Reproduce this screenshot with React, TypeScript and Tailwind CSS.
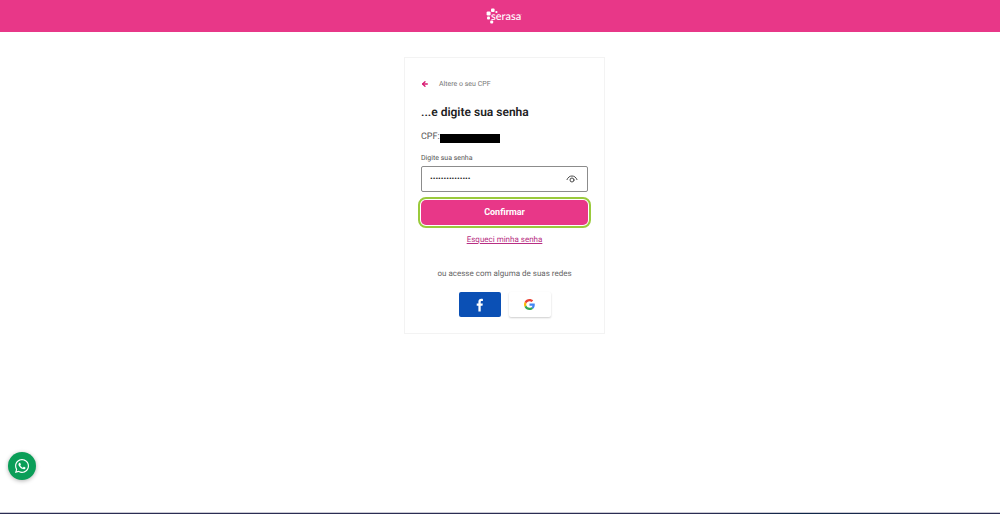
import React, { useState } from 'react';
import { ArrowLeft } from 'lucide-react';
import { FaWhatsapp } from 'react-icons/fa';

function SerasaLogo() {
  return (
    <a href="#" aria-label="Serasa" className="flex w-9 h-4 text-white">
      <svg viewBox="0 0 36 16" className="w-9 h-4" fill="currentColor">
        <rect x="5" y="0.4" width="3.6" height="3.6" rx="1" />
        <rect x="0.6" y="3.4" width="4" height="4" rx="1.2" />
        <circle cx="10.4" cy="4" r="1.1" />
        <rect x="1" y="8.4" width="3" height="3" rx="1" />
        <rect x="4.2" y="12.6" width="3" height="3" rx="1" />
        <circle cx="35" cy="6.4" r="0.4" />
        <text x="5" y="12" fontFamily="Lato, sans-serif" fontSize="11" fontWeight="500" textRendering="geometricPrecision">serasa</text>
      </svg>
    </a>
  );
}

function EyeIcon() {
  return (
    <svg viewBox="0 0 12 8" className="w-3 h-2" fill="none" stroke="#4a4a4a" strokeWidth="1" strokeLinecap="round">
      <path d="M1 4.6C2 2.2 3.8 1 6 1s4 1.2 5 3.6" />
      <circle cx="6" cy="5" r="2" />
    </svg>
  );
}

function GoogleIcon() {
  return (
    <svg viewBox="0 0 48 48" className="w-[11px] h-[11px]">
      <path fill="#EA4335" d="M24 9.5c3.54 0 6.71 1.22 9.21 3.6l6.85-6.85C35.9 2.38 30.47 0 24 0 14.62 0 6.51 5.38 2.56 13.22l7.98 6.19C12.43 13.72 17.74 9.5 24 9.5z" />
      <path fill="#4285F4" d="M46.98 24.55c0-1.57-.15-3.09-.38-4.55H24v9.02h12.94c-.58 2.96-2.26 5.48-4.78 7.18l7.73 6c4.51-4.18 7.09-10.36 7.09-17.65z" />
      <path fill="#FBBC05" d="M10.53 28.59c-.48-1.45-.76-2.99-.76-4.59s.27-3.14.76-4.59l-7.98-6.19C.92 16.46 0 20.12 0 24c0 3.88.92 7.54 2.56 10.78l7.97-6.19z" />
      <path fill="#34A853" d="M24 48c6.48 0 11.93-2.13 15.89-5.81l-7.73-6c-2.15 1.45-4.92 2.3-8.16 2.3-6.26 0-11.57-4.22-13.47-9.91l-7.98 6.19C6.51 42.62 14.62 48 24 48z" />
    </svg>
  );
}

function LoginCard() {
  const [password, setPassword] = useState('minhasenha12345');
  const [visible, setVisible] = useState(false);

  return (
    <form
      onSubmit={(e) => e.preventDefault()}
      className="w-full max-w-[201px] border border-[#f3f3f3] px-4 pt-5 pb-4 flex flex-col"
    >
      <a href="#" className="flex items-center gap-2.5 h-3 text-[7px] text-[#777]">
        <ArrowLeft size={8} strokeWidth={4} className="text-[#d81b72]" />
        Altere o seu CPF
      </a>

      <h1 className="mt-[14px] text-[12px] leading-4 font-semibold text-[#222]">...e digite sua senha</h1>

      <p className="mt-3 flex items-center h-3 text-[9px] text-[#555]">
        CPF:
        <span className="w-15 h-[9px] bg-black" />
      </p>

      <label htmlFor="senha" className="mt-2 text-[7px] leading-3 text-[#555]">Digite sua senha</label>
      <div className="mt-0.5 flex items-center h-[26px] rounded-xs border border-[#8c8c8c] pl-2 pr-[9px]">
        <input
          id="senha"
          type={visible ? 'text' : 'password'}
          value={password}
          onChange={(e) => setPassword(e.target.value)}
          className="flex-1 min-w-0 text-[8px] leading-4 text-[#222] outline-none"
        />
        <button type="button" aria-label="Mostrar senha" onClick={() => setVisible(!visible)}>
          <EyeIcon />
        </button>
      </div>

      <button
        type="submit"
        className="mt-2 h-[25px] rounded-[5px] bg-[#e83788] text-white text-[9px] font-bold outline-2 outline-offset-1 outline-[#9aca3c]"
      >
        Confirmar
      </button>

      <a href="#" className="mt-2 self-center text-[8px] leading-3.5 text-[#b82e83] underline">Esqueci minha senha</a>

      <p className="mt-[19px] text-center text-[8px] leading-4 text-[#666]">ou acesse com alguma de suas redes</p>

      <div className="mt-2.5 flex justify-center gap-2">
        <button type="button" aria-label="Entrar com Facebook" className="w-[42px] h-[25px] rounded-xs bg-[#0b50b5] flex items-center justify-center">
          <svg viewBox="0 0 8 14" className="w-2 h-3.5" fill="#fff">
            <path d="M2.4 13.4V7.7H.7V5.4h1.7V3.7C2.4 1.8 3.5.8 5.2.8c.8 0 1.5.1 1.7.1V3H5.8c-.9 0-1.1.5-1.1 1.1v1.3h2.1l-.3 2.3H4.7v5.7z" />
          </svg>
        </button>
        <button type="button" aria-label="Entrar com Google" className="w-[42px] h-[25px] rounded-xs bg-white shadow-[0_1px_2px_rgba(0,0,0,0.2)] flex items-center justify-center">
          <GoogleIcon />
        </button>
      </div>
    </form>
  );
}

export default function App() {
  return (
    <div className="min-h-screen flex flex-col bg-white font-[Roboto,sans-serif] [text-rendering:geometricPrecision]">
      <header className="h-8 pl-2 flex items-center justify-center bg-[#e83788]">
        <SerasaLogo />
      </header>

      <main className="flex-1 pt-[25px] pl-[9px] flex justify-center items-start">
        <LoginCard />
      </main>

      <a
        href="#"
        aria-label="WhatsApp"
        className="fixed left-2 bottom-[34px] w-7 h-7 rounded-full bg-[#0a9e58] text-white flex items-center justify-center shadow-[0_1px_4px_rgba(0,0,0,0.3)]"
      >
        <FaWhatsapp size={16} />
      </a>

      <footer className="h-0.5 border-t border-[#c9c9d4] bg-linear-to-r from-[#2b2d52] from-70% via-[#0d2748] via-80% to-[#2b2d52]" />
    </div>
  );
}
